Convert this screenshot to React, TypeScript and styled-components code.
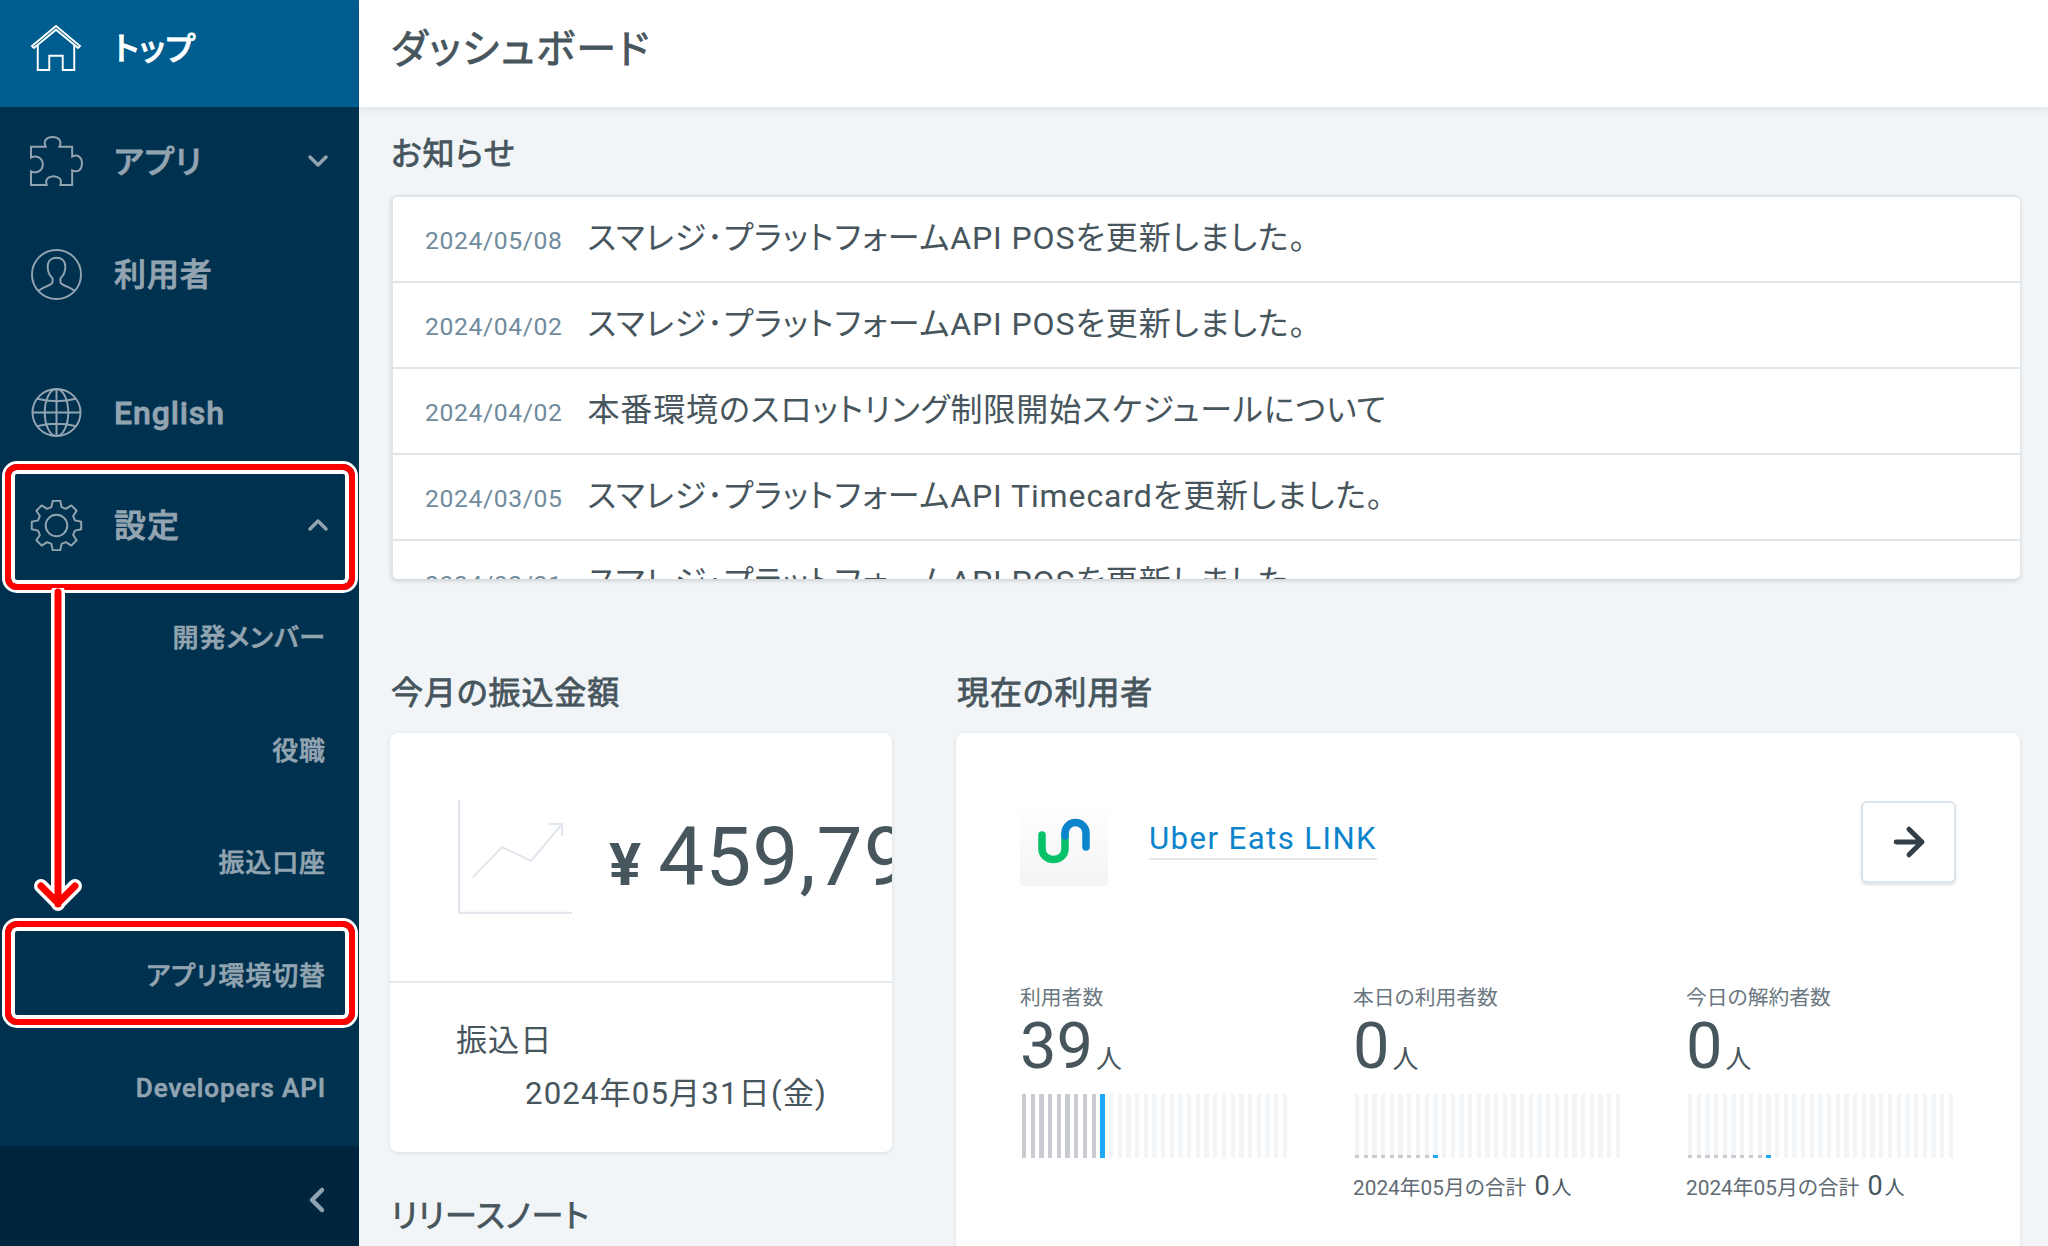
import React from 'react';
import styled, { createGlobalStyle } from 'styled-components';
import { ArrowRight } from 'lucide-react';

const GlobalStyle = createGlobalStyle`
  html, body {
    margin: 0;
    padding: 0;
    background: #f1f5f8;
  }
  * { box-sizing: border-box; }
`;

const Page = styled.div`
  position: relative;
  display: flex;
  width: 2048px;
  height: 1246px;
  overflow: hidden;
  font-family: Roboto, "Noto Sans CJK JP", sans-serif;
  font-feature-settings: "palt";
  font-size: 32px;
  letter-spacing: 0.9px;
  color: #47555d;
  background: #f1f5f8;
`;

const Sidebar = styled.aside`
  display: flex;
  flex-direction: column;
  flex: 0 0 359px;
  background: #00314f;
  color: #93a4b1;
`;

const NavRow = styled.div<{ $h?: number; $active?: boolean; $mt?: number }>`
  display: flex;
  align-items: center;
  flex: 0 0 ${p => p.$h ?? 112.5}px;
  margin-top: ${p => p.$mt ?? 0}px;
  padding: 0 30px ${p => (p.$active ? 11 : 0)}px 30px;
  background: ${p => (p.$active ? '#005d90' : 'transparent')};
  color: ${p => (p.$active ? '#fff' : 'inherit')};
  font-weight: 500;
  -webkit-text-stroke: 0.8px currentColor;
`;

const IconBox = styled.span`
  display: flex;
  flex: 0 0 54px;
  margin-right: 30px;
  svg { display: block; }
`;

const NavLabel = styled.span<{ $latin?: boolean }>`
  flex: 1;
  padding-bottom: ${p => (p.$latin ? 0 : 5)}px;
`;

const SubRow = styled.div<{ $latin?: boolean }>`
  display: flex;
  align-items: center;
  justify-content: flex-end;
  flex: 0 0 112.5px;
  padding: 0 33px ${p => (p.$latin ? 0 : 4)}px 0;
  font-size: 26px;
  font-weight: 500;
  -webkit-text-stroke: 0.6px currentColor;
  &:first-of-type { margin-top: -1.5px; }
`;

const SideFoot = styled.div`
  display: flex;
  justify-content: flex-end;
  flex: 1;
  margin-top: 2px;
  padding: 40px 31px 0 0;
  background: #00263f;
`;

const Main = styled.main`
  display: flex;
  flex-direction: column;
  flex: 1;
  min-width: 0;
`;

const Header = styled.header`
  display: flex;
  align-items: center;
  flex: 0 0 107px;
  padding: 0 0 16px 32px;
  background: #fff;
  box-shadow: 0 2px 8px rgba(0, 0, 0, 0.08);
  font-size: 40px;
  letter-spacing: 1.6px;
  -webkit-text-stroke: 0.8px currentColor;
`;

const Content = styled.div`
  padding: 25px 28px 0 31px;
`;

const Heading = styled.h2<{ $mt?: number }>`
  margin: ${p => p.$mt ?? 0}px 0 0 1px;
  font-size: 32px;
  font-weight: 400;
  letter-spacing: 0.9px;
  line-height: 44px;
  -webkit-text-stroke: 0.8px currentColor;
`;

const NewsCard = styled.div`
  height: 384px;
  margin: 19px 0 0 1px;
  overflow: hidden;
  background: #fff;
  border-radius: 6px;
  border-top: 2px solid #e2e5e7;
  border-left: 2px solid #e2e5e7;
  box-shadow: 0 2px 4px rgba(0, 0, 0, 0.15);
`;

const NewsRow = styled.div`
  display: flex;
  align-items: baseline;
  height: 86px;
  padding: 21px 0 0 32px;
  border-bottom: 2px solid #e2e5e7;
  line-height: 40px;
`;

const NewsDate = styled.span`
  flex: 0 0 auto;
  margin-right: 25px;
  font-size: 24.7px;
  letter-spacing: 0.6px;
  color: #6f8b9c;
`;

const Columns = styled.div`
  display: grid;
  grid-template-columns: 502px 1064px;
  column-gap: 64px;
  margin-top: 92px;
`;

const Card = styled.div`
  background: #fff;
  border-radius: 8px;
  box-shadow: 0 1px 4px rgba(0, 0, 0, 0.1);
`;

const AmountCard = styled(Card)`
  height: 419px;
  margin-top: 18px;
  overflow: hidden;
`;

const AmountTop = styled.div`
  display: flex;
  align-items: center;
  height: 250px;
  padding-left: 68px;
  border-bottom: 2px solid #e3e9ee;
  white-space: nowrap;
`;

const ChartIcon = styled.svg`
  flex: 0 0 114px;
  margin-right: 37px;
`;

const Yen = styled.span`
  margin-right: 17px;
  padding-top: 14px;
  font-size: 60px;
  font-weight: 700;
  letter-spacing: 0;
`;

const Amount = styled.span`
  font-size: 82px;
  letter-spacing: 1px;
  line-height: 1;
`;

const AmountBottom = styled.div`
  padding: 31px 0 0 66px;
  font-size: 31.2px;
  line-height: 53px;
`;

const PayDate = styled.div`
  padding-left: 69px;
  letter-spacing: 1.1px;
`;

const UsersCard = styled(Card)`
  height: 620px;
  margin-top: 18px;
  padding: 67px 64px 0 64px;
`;

const AppHead = styled.div`
  display: flex;
  align-items: flex-start;
`;

const LogoBox = styled.div`
  flex: 0 0 88px;
  height: 86px;
  margin-right: 41px;
  border-radius: 4px;
  background: linear-gradient(#fff, #f4f4f4);
`;

const AppLink = styled.a`
  margin-top: 20px;
  border-bottom: 2px solid #dfe6ec;
  color: #0b84cc;
  font-size: 31.2px;
  letter-spacing: 1.4px;
  line-height: 38px;
`;

const ArrowButton = styled.button`
  display: flex;
  align-items: center;
  justify-content: center;
  width: 95px;
  height: 82px;
  margin: 1px 0 0 auto;
  padding: 0;
  background: #fff;
  border: 2px solid #dde5ec;
  border-radius: 6px;
  box-shadow: 0 2px 3px rgba(0, 0, 0, 0.12);
  color: #333f48;
`;

const Stats = styled.div`
  display: grid;
  grid-template-columns: repeat(3, 333px);
  margin-top: 97px;
`;

const StatLabel = styled.div`
  font-size: 20.8px;
  letter-spacing: 0;
  line-height: 30px;
  color: #6a7780;
`;

const StatValue = styled.div`
  font-size: 65px;
  line-height: 66px;
  letter-spacing: 0;
`;

const Unit = styled.span`
  margin-left: 3px;
  font-size: 26px;
`;

const Bars = styled.div`
  display: flex;
  justify-content: space-between;
  width: 265px;
  height: 64px;
  margin: 2px 0 0 2px;
`;

const Bar = styled.div`
  display: flex;
  flex-direction: column;
  justify-content: flex-end;
  width: 4.33px;
  background: #f3f6f9;
`;

const BarFill = styled.div<{ $today: boolean }>`
  background: ${p => (p.$today ? '#1ea7fd' : '#c8ccd0')};
`;

const StatFoot = styled.div`
  margin-top: 12px;
  font-size: 20.8px;
  letter-spacing: 0;
  line-height: 32px;
  color: #5f6c75;
`;

const FootValue = styled.span`
  margin-left: 8px;
  font-size: 27px;
  color: #47555d;
`;

const FootUnit = styled.span`
  margin-left: 2px;
  font-size: 20px;
  color: #47555d;
`;

const Callout = styled.div<{ $top: number; $height: number }>`
  position: absolute;
  left: 5px;
  top: ${p => p.$top}px;
  width: 350px;
  height: ${p => p.$height}px;
  border: 6px solid #f00;
  border-radius: 12px;
  box-shadow: 0 0 0 3px #fff, inset 0 0 0 4px #fff;
`;

const CalloutArrow = styled.svg`
  position: absolute;
  left: 28px;
  top: 588px;
`;

const stroke = '#93a4b1';

const HomeIcon = () => (
  <svg width="52" height="48" viewBox="0 0 54 50" fill="none" stroke="#fff" strokeWidth="2">
    <path d="M2 23 27 2l25 21-2 2L27 6 4 25z" />
    <path d="M8 22v26h12V33h14v15h12V22" />
  </svg>
);

const PuzzleIcon = () => (
  <svg width="53" height="50" viewBox="0 0 54 51" fill="none" stroke={stroke} strokeWidth="2">
    <path d="M1 11h15c-3-6 1-10 7-10s10 4 7 10h13v10c6-3 10 1 10 7s-4 10-10 7v15H31c2-6-2-9-7-9s-9 3-7 9H1V36c6 3 12-1 12-7S7 19 1 22z" />
  </svg>
);

const UserIcon = () => (
  <svg width="53" height="51" viewBox="0 0 54 52" fill="none" stroke={stroke} strokeWidth="2">
    <circle cx="27" cy="26" r="25" />
    <path d="M8 43c4-4 14-6 15-9v-4c-3-3-5-7-5-12 0-6 4-9 9-9s9 3 9 9c0 5-2 9-5 12v4c1 3 11 5 15 9" />
  </svg>
);

const GlobeIcon = () => (
  <svg width="53" height="49" viewBox="0 0 54 50" fill="none" stroke={stroke} strokeWidth="2">
    <ellipse cx="27" cy="25" rx="24.5" ry="24" />
    <ellipse cx="27" cy="25" rx="12" ry="24" />
    <path d="M27 1v48M2.500 25h49M7 11c12 3 28 3 40 0M7 39c12-3 28-3 40 0" />
  </svg>
);

// eight trapezoid teeth around the centre
const gearPath = () => {
  const pts: string[] = [];
  for (let i = 0; i < 8; i++) {
    const a = (i * Math.PI) / 4 - Math.PI / 2;
    [[-0.27, 19.5], [-0.15, 25.5], [0.15, 25.5], [0.27, 19.5]].forEach(([d, r]) => {
      pts.push(`${(27 + r * Math.cos(a + d)).toFixed(1)} ${(26 + r * Math.sin(a + d)).toFixed(1)}`);
    });
  }
  return `M${pts.join('L')}Z`;
};

const GearIcon = () => (
  <svg width="53" height="51" viewBox="0 0 54 52" fill="none" stroke={stroke} strokeWidth="2">
    <path d={gearPath()} strokeLinejoin="round" />
    <circle cx="27" cy="26" r="11" />
  </svg>
);

const Chevron = ({ d, w = 3.5 }: { d: string; w?: number }) => (
  <svg width="22" height="28" viewBox="0 0 22 28" fill="none" stroke={stroke} strokeWidth={w} strokeLinecap="round" strokeLinejoin="round">
    <path d={d} />
  </svg>
);

const news = [
  ['2024/05/08', 'スマレジ･プラットフォームAPI POSを更新しました。'],
  ['2024/04/02', 'スマレジ･プラットフォームAPI POSを更新しました。'],
  ['2024/04/02', '本番環境のスロットリング制限開始スケジュールについて'],
  ['2024/03/05', 'スマレジ･プラットフォームAPI Timecardを更新しました。'],
  ['2024/02/21', 'スマレジ･プラットフォームAPI POSを更新しました。'],
];

const stats = [
  { label: '利用者数', value: 39, fill: 100, total: false },
  { label: '本日の利用者数', value: 0, fill: 5, total: true },
  { label: '今日の解約者数', value: 0, fill: 5, total: true },
];

export default function App() {
  return (
    <Page>
      <GlobalStyle />
      <Sidebar>
        <NavRow $h={107} $active>
          <IconBox><HomeIcon /></IconBox>
          <NavLabel>トップ</NavLabel>
        </NavRow>
        <NavRow $h={108}>
          <IconBox><PuzzleIcon /></IconBox>
          <NavLabel>アプリ</NavLabel>
          <Chevron d="M3 10l8 8 8-8" />
        </NavRow>
        <NavRow $h={118}>
          <IconBox><UserIcon /></IconBox>
          <NavLabel>利用者</NavLabel>
        </NavRow>
        <NavRow $mt={23.5}>
          <IconBox><GlobeIcon /></IconBox>
          <NavLabel $latin>English</NavLabel>
        </NavRow>
        <NavRow>
          <IconBox><GearIcon /></IconBox>
          <NavLabel>設定</NavLabel>
          <Chevron d="M3 18l8-8 8 8" />
        </NavRow>
        <SubRow>開発メンバー</SubRow>
        <SubRow>役職</SubRow>
        <SubRow>振込口座</SubRow>
        <SubRow>アプリ環境切替</SubRow>
        <SubRow $latin>Developers API</SubRow>
        <SideFoot>
          <Chevron d="M16 4 6 14l10 10" w={4.5} />
        </SideFoot>
      </Sidebar>

      <Main>
        <Header>ダッシュボード</Header>
        <Content>
          <Heading>お知らせ</Heading>
          <NewsCard>
            {news.map(([date, title], i) => (
              <NewsRow key={i}>
                <NewsDate>{date}</NewsDate>
                {title}
              </NewsRow>
            ))}
          </NewsCard>
          <Columns>
            <div>
              <Heading>今月の振込金額</Heading>
              <AmountCard>
                <AmountTop>
                  <ChartIcon width="114" height="114" viewBox="0 0 114 114" fill="none" stroke="#e1e7ed" strokeWidth="2">
                    <path d="M1 0v113h113" strokeWidth="2.500" />
                    <path d="M15 77l29-30 29 14 31-37M91 24h13v12" />
                  </ChartIcon>
                  <Yen>¥</Yen>
                  <Amount>459,79</Amount>
                </AmountTop>
                <AmountBottom>
                  振込日
                  <PayDate>2024年05月31日(金)</PayDate>
                </AmountBottom>
              </AmountCard>
              <Heading $mt={42}>リリースノート</Heading>
            </div>
            <div>
              <Heading>現在の利用者</Heading>
              <UsersCard>
                <AppHead>
                  <LogoBox>
                    <svg width="88" height="86" viewBox="0 0 88 86" fill="none" strokeWidth="7.500" strokeLinecap="round">
                      <path d="M22 35v14a11.500 10.500 0 0 0 23 0V34" stroke="#06c167" />
                      <path d="M45 36v-3a10.500 10.500 0 0 1 21 0v14" stroke="#0b84cc" />
                    </svg>
                  </LogoBox>
                  <AppLink>Uber Eats LINK</AppLink>
                  <ArrowButton>
                    <ArrowRight size={44} strokeWidth={2.7} />
                  </ArrowButton>
                </AppHead>
                <Stats>
                  {stats.map(s => (
                    <div key={s.label}>
                      <StatLabel>{s.label}</StatLabel>
                      <StatValue>{s.value}<Unit>人</Unit></StatValue>
                      <Bars>
                        {Array.from({ length: 31 }, (_, i) => (
                          <Bar key={i}>
                            {i < 10 && <BarFill $today={i === 9} style={{ height: `${s.fill}%` }} />}
                          </Bar>
                        ))}
                      </Bars>
                      {s.total && (
                        <StatFoot>
                          2024年05月の合計<FootValue>0</FootValue><FootUnit>人</FootUnit>
                        </StatFoot>
                      )}
                    </div>
                  ))}
                </Stats>
              </UsersCard>
            </div>
          </Columns>
        </Content>
      </Main>

      <Callout $top={464} $height={126} />
      <Callout $top={921} $height={104} />
      <CalloutArrow width="60" height="330" viewBox="0 0 60 330" fill="none" strokeLinecap="round" strokeLinejoin="round">
        <path d="M30 4v312M13 298l17 17 17-17" stroke="#fff" strokeWidth="14" />
        <path d="M30 4v312M13 298l17 17 17-17" stroke="#f00" strokeWidth="7" />
      </CalloutArrow>
    </Page>
  );
}
